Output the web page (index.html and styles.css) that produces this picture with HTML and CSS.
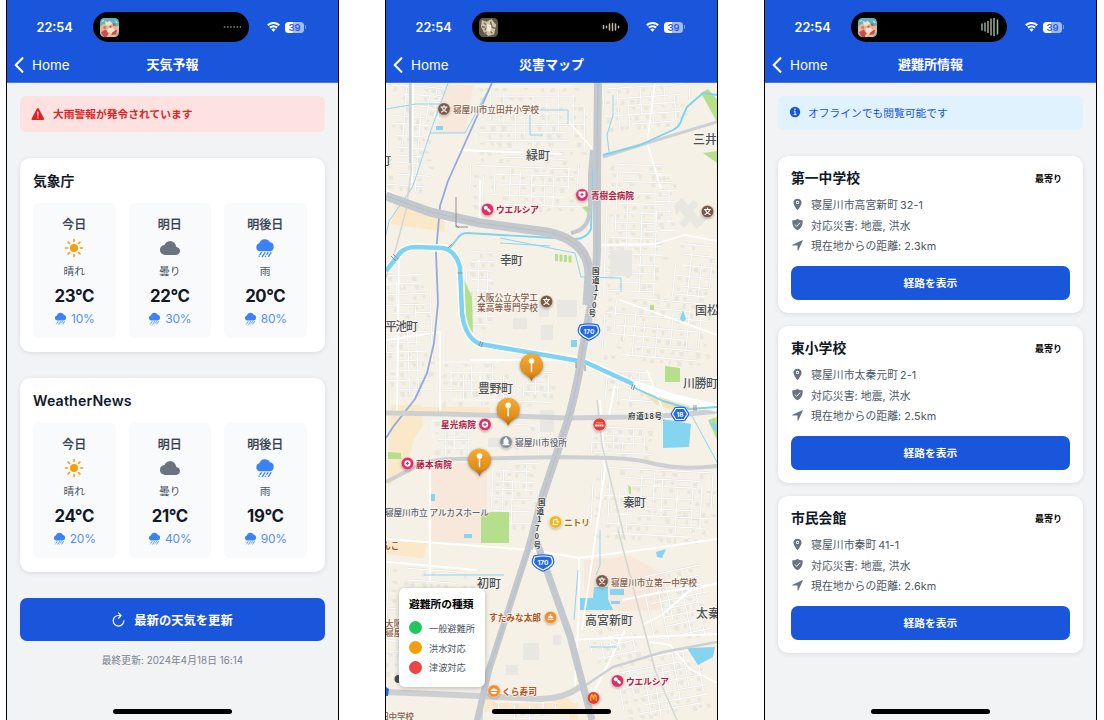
FILE: index.html
```
<!DOCTYPE html>
<html lang="ja">
<head>
<meta charset="utf-8">
<title>防災アプリ</title>
<link rel="stylesheet" href="styles.css">
</head>
<body>
<svg class="defs" width="0" height="0">
  <defs>
    <symbol id="wifi" viewBox="0 0 26 20"><path d="M13 19.500l4.300-4.700a6.500 6.500 0 0 0-8.600 0z" fill="#fff"/><path d="M5.800 11.300a10.800 10.800 0 0 1 14.400 0M1.600 6.600a16.500 16.500 0 0 1 22.800 0" fill="none" stroke="#fff" stroke-width="4.200"/></symbol>
    <symbol id="chev" viewBox="0 0 10 16"><path d="M8.400 1.200L1.700 8l6.700 6.800" fill="none" stroke="#fff" stroke-width="2.100" stroke-linecap="round" stroke-linejoin="round"/></symbol>
    <symbol id="sun" viewBox="0 0 20 20"><circle cx="10" cy="10" r="4"/><path d="M10 1.500v2M10 16.500v2M1.500 10h2M16.500 10h2M4.100 4.100l1.400 1.400M14.500 14.500l1.400 1.400M4.100 15.900l1.400-1.400M14.500 5.500l1.400-1.400" fill="none" stroke="currentColor" stroke-width="1.600" stroke-linecap="round"/></symbol>
    <symbol id="cloud" viewBox="0 0 512 512"><path d="M396 432H136c-36.440 0-70.360-12.570-95.510-35.410C14.380 372.880 0 340 0 304c0-36.580 13.390-68.120 38.720-91.220 18.110-16.530 42.220-28.250 69.180-33.870a16 16 0 0 0 11.370-9.150 156.240 156.240 0 0 1 42.050-56.940C187.760 91.690 220.500 80 256 80a153.570 153.570 0 0 1 107.140 42.900c24.730 23.810 41.500 55.280 49.180 92a16 16 0 0 0 12.120 12.390C470 237.420 512 270.430 512 328c0 33.390-12.240 60.780-35.410 79.230C456.230 423.430 428.370 432 396 432z"/></symbol>
    <symbol id="rain" viewBox="0 0 20 20"><path d="M4.800 13.200A4.100 4.100 0 0 1 4.300 5.200 5.800 5.800 0 0 1 15 4.300a4.500 4.500 0 0 1-.3 8.900z"/><path d="M6.300 14.700l-1.300 1.800M10 14.700l-2.700 4M13 14.700l-1.200 1.700M16 14.700l-2.400 3.700M4.200 18l-.2.300M10.600 18.200l-.2.300" fill="none" stroke="currentColor" stroke-width="1.300" stroke-linecap="round"/></symbol>
    <symbol id="warn" viewBox="0 0 512 512"><path fill-rule="evenodd" d="M449.070 399.080L278.640 82.580c-12.080-22.440-44.260-22.440-56.350 0L51.870 399.080A32 32 0 0 0 80 446.250h340.890a32 32 0 0 0 28.180-47.170zm-198.600-1.830a20 20 0 1 1 20-20 20 20 0 0 1-20 20zm21.720-201.150l-5.740 122a16 16 0 0 1-32 0l-5.740-121.950a21.730 21.730 0 0 1 21.500-22.690h.21a21.740 21.740 0 0 1 21.770 22.700z"/></symbol>
    <symbol id="info" viewBox="0 0 12 12"><circle cx="6" cy="6" r="5.200"/><circle cx="6" cy="3.300" r=".8" fill="#e0f2fe"/><path d="M5.200 5.200h.9v3.200M4.900 8.600h2.400" fill="none" stroke="#e0f2fe" stroke-width="1" stroke-linecap="round"/></symbol>
    <symbol id="refresh" viewBox="0 0 512 512"><path d="M320 146s24.360-12-64-12a160 160 0 1 0 160 160M256 58l80 80-80 80" fill="none" stroke="currentColor" stroke-width="34" stroke-linecap="round" stroke-linejoin="round"/></symbol>
    <symbol id="loc" viewBox="0 0 512 512"><path fill-rule="evenodd" d="M256 32C167.670 32 96 96.510 96 176c0 128 160 304 160 304s160-176 160-304c0-79.490-71.670-144-160-144zm0 208a64 64 0 1 1 64-64 64 64 0 0 1-64 64z"/><circle cx="256" cy="176" r="32"/></symbol>
    <symbol id="shield" viewBox="0 0 512 512"><path d="M256 28c-52 44-124 56-204 62-12 178 50 316 204 394C410 406 472 268 460 90c-80-6-152-18-204-62z"/><path d="M170 270l56 62 120-140" fill="none" stroke="#fff" stroke-width="38" stroke-linecap="round" stroke-linejoin="round"/></symbol>
    <symbol id="nav" viewBox="0 0 512 512"><path d="M272 464a16 16 0 0 1-16-16.420V264.130a8 8 0 0 0-8-8H64.410a16.310 16.310 0 0 1-15.490-10.650 16 16 0 0 1 8.410-19.870l384-176.150a16 16 0 0 1 21.220 21.190l-176 384A16 16 0 0 1 272 464z"/></symbol>
    <symbol id="cover" viewBox="0 0 20 20"><rect width="20" height="20" rx="4.500" fill="#62b3c0"/><path d="M0 9l4-3 4 2 3-3 5 4 4-1v6l-4 6H4l-4-4z" fill="#e3b79b"/><path d="M1 15l5-3 3 4-2 4H4zM13 12l5 1-1 4-5 1z" fill="#cf4c43"/><path d="M5 3l3 1.500 2-1.500 3 2.500-3 3-4-1zM8 11l5-1 3 3-4 3-4-1z" fill="#f8dfca"/><circle cx="5" cy="10" r="1.600" fill="#cf7961"/><circle cx="15" cy="7" r="1.500" fill="#b9604f"/><circle cx="11" cy="9" r="1.200" fill="#a2604a"/><path d="M2 4l2-2M16 3l2 2M9 18l3-2" stroke="#d4e4d1" stroke-width="1.200"/></symbol>
    <symbol id="cover2" viewBox="0 0 20 20"><rect width="20" height="20" rx="4.500" fill="#5f5948"/><path d="M3 2l5 2 5-3 5 6-2 10-6 2-5-4-3-6z" fill="#cfc3a8"/><path d="M5 5l4 3-3 5M12 4l2 6 4 1M10 12l4 4M3 9l3 1M8 15l-3 2" fill="none" stroke="#7d6b4e" stroke-width="1.500"/><path d="M8 6l5 2-1 7-4-2z" fill="#f2ecd9"/></symbol>
  </defs>
</svg>
<main class="phones">

<section class="phone">
  <header class="top">
    <div class="status"><span class="time">22:54</span><div class="island"><svg width="19" height="19"><use href="#cover"/></svg><svg width="18" height="18" viewBox="0 0 18 18"><path d="M.8 9h18" stroke="#8b8676" stroke-width="1.500" stroke-dasharray="1.500 1.700"/></svg></div><svg class="wifi" width="13" height="10"><use href="#wifi"/></svg><span class="battery">39</span><i class="nub"></i></div>
    <div class="nav"><a class="back"><svg width="10" height="16"><use href="#chev"/></svg>Home</a><h1>天気予報</h1></div>
  </header>
  <div class="body">
    <div class="alert"><svg width="16" height="16"><use href="#warn"/></svg>大雨警報が発令されています</div>
    <article class="card forecast"><h2>気象庁</h2>
      <div class="days">
        <div class="day"><b>今日</b><svg class="sun"><use href="#sun"/></svg><span>晴れ</span><strong>23°C</strong><em><svg><use href="#rain"/></svg>10%</em></div>
        <div class="day"><b>明日</b><svg class="cloud"><use href="#cloud"/></svg><span>曇り</span><strong>22°C</strong><em><svg><use href="#rain"/></svg>30%</em></div>
        <div class="day"><b>明後日</b><svg class="rain"><use href="#rain"/></svg><span>雨</span><strong>20°C</strong><em><svg><use href="#rain"/></svg>80%</em></div>
      </div>
    </article>
    <article class="card forecast"><h2 class="latin">WeatherNews</h2>
      <div class="days">
        <div class="day"><b>今日</b><svg class="sun"><use href="#sun"/></svg><span>晴れ</span><strong>24°C</strong><em><svg><use href="#rain"/></svg>20%</em></div>
        <div class="day"><b>明日</b><svg class="cloud"><use href="#cloud"/></svg><span>曇り</span><strong>21°C</strong><em><svg><use href="#rain"/></svg>40%</em></div>
        <div class="day"><b>明後日</b><svg class="rain"><use href="#rain"/></svg><span>雨</span><strong>19°C</strong><em><svg><use href="#rain"/></svg>90%</em></div>
      </div>
    </article>
    <button class="btn update"><svg width="17" height="17"><use href="#refresh"/></svg>最新の天気を更新</button>
    <p class="updated">最終更新: 2024年4月18日 16:14</p>
  </div>
  <i class="homebar"></i>
</section>

<section class="phone">
  <header class="top">
    <div class="status"><span class="time">22:54</span><div class="island"><svg width="19" height="19"><use href="#cover2"/></svg><svg width="18" height="18" viewBox="0 0 18 18"><path d="M1.500 7.500v3M4.500 8.200v1.600M7.500 6v6M10.500 5.500v7M13.500 6v6M16.500 8.300v1.400" stroke="#bdb7a6" stroke-width="1.500" stroke-linecap="round"/></svg></div><svg class="wifi" width="13" height="10"><use href="#wifi"/></svg><span class="battery">39</span><i class="nub"></i></div>
    <div class="nav"><a class="back"><svg width="10" height="16"><use href="#chev"/></svg>Home</a><h1>災害マップ</h1></div>
  </header>
  <div class="mapwrap">
    <svg class="map" viewBox="386 83 331 637" width="331" height="637">
      <rect x="386" y="83" width="331" height="637" fill="#f5f1e6"/>
      <g fill="#f8e8db"><path d="M446 85h27l-8 48h-30zM430 463h57v50h-6v30h-51zM584 560l46-4 38 20-8 34-75 2z"/></g>
      <g fill="#fae8c8"><path d="M398 195l47 18v19l-54-8zM391 405h30l2 20-9 14-7 28-19 20zM420 407h70v6h-70zM386 540l42 3-5 15-37-4zM484 700l85-2 4 12-90 2zM570 703h8v17h-9z"/></g>
      <g id="streets"></g>
      <g fill="#e9e7e2"><path d="M610 250h22v26h-22zM674 205l8-7 6 7 6-5 5 5-6 6 5 6 5-3 4 5-10 10-7-7-6 6-5-5 6-6-5-6-4 4zM557 300h20v17h-20zM539 302h10v15h-10zM513 318h14v11h-14zM541 325h12v15h-12zM523 643h16v17h-16zM553 635h8v10h-8zM506 665h12v10h-12zM488 438h12v9h-12zM540 410h14v22h-14z"/></g>
      <g fill="#b5df8a"><path d="M701 93l7-4 9 10v23zM703 153l14-2v12zM582 207l7-1v9zM463 277l9 20 1 36-8-12zM555 254h3v7h-3zM559.500 254.500h3v7h-3zM564 255h3v7h-3zM568.500 255.500h3v7h-3zM481 512h28v31h-28zM665 366l15 2v14h-15zM388 452l13 1v6h-13zM650 305h4v5h-4zM628 485l3 2v7h-2zM708 420l9-3v23zM438 410l5 3h-5z"/></g>
      <g fill="#85d5f0"><path d="M663 419l28 5-2 23-26 1zM578 598h15l1-11h14v12l5 11h-35zM610 589h14v6h-14zM611 601h9v3h-9zM687 648l28-1-2 10-15 8zM656 552l10-3-4 9-5-1zM571 340h6v7h-6zM680 319l3-9 3 9-3 3zM436 126h7v4h-7zM431 494h4v7h-4zM464 534h8v4h-8zM709 422l8 2v9z"/></g>
      <path d="M637 388l53 18-3 8-30-9z" fill="#f1e5b8"/>
      <g class="w"><path d="M386 539l65 5 80 6 48 8 76-10 62-9M579 558v50l-4 80M430 463v120M387 562l90 8M386 190l62 32M399 255l-2 160M413 83l-1 100M458 150l104 4M567 120l25 28M597 245l58-1 30-9 32 6M600 400l5 70-23 160M622 600l40-8 55-8M642 625l20-10 27-24 28-8M650 642l20 3 20 24 27 14M655 83l-8 60 14 46M620 300l97 35M386 340l54-8v80M567 640l150-6M470 360h95M480 180v45M590 700l35-70M647 370l20 50M615 385l-6 30"/></g>
      <g class="thin-water"><path d="M448 83l-18 50-15 47-3 8-23 33-3 14M386 109l30-5h30M430 133h35l27-50M530 115v20h13M530 110h38v14M613 95v20l-6 20 2 17M500 238l75 15 6 24 40 1v14M500 243l50 3M424 575h80M590 647h27M578 570l-4 50M692 416l26 48M600 530v35l-4 10M482 704v16"/></g>
      <g class="railgray"><path d="M411 83v90l-5 37-15 57-5 10M597 400l5 45 23 95M618 530l37 140 22 50"/></g>
      <path class="rail" d="M492 83l-44 98-8 25-4 47 2 50-4 40-7 30-12 26-22 28-7 11"/>
      <g class="road gray"><path d="M603 157l44-14 70-21" stroke-width="3"/><path d="M386 413l61 1 66 2 54 2 63-1 50-2 37-4" stroke-width="5"/><path d="M386 482l27-14q18-9 40-9l107-2 53 1q20 1 34 4 32 9 70 4" stroke-width="4"/><path d="M386 692l94 4 60 3q23 0 40-12" stroke-width="6"/><path d="M580 689l33-22 50-15 54-10" stroke-width="2.500"/><path d="M410 83v80" stroke-width="2"/></g>
      <g class="water-edge"><path d="M386 271l14-18q6-6 15-6l28 1q12 2 17 19l2 46q3 25 18 31l47 8 58 10 48 22 42 14 42 10"/></g>
      <g class="water"><path d="M386 271l14-18q6-6 15-6l28 1q12 2 17 19l2 46q3 25 18 31l47 8 58 10 48 22"/><path class="brook" d="M633 387l30 14 27 8 27-2M450 248l7-9q4-6 10-6l105 6q14 1 19-10l2-75M603 155l37-10 33-15q7-3 9-12l5-11 16-14 14 2"/></g>
      <g class="road"><path d="M598 83l-1 90v75q0 22-6 57l-9 48q-3 26-14 67l-25 75-14 54" stroke-width="8"/><path d="M531 540l-42 130-12 51" stroke-width="6.500"/><path d="M536 540l34 96 22 84" stroke-width="7"/><path d="M592 150l-2 25v32q0 23-19 26" stroke-width="4"/><path d="M386 196l44 16 50 11 67 9q42 9 42 43l-2 30" stroke-width="9"/></g>
      <g class="roadline"><path d="M386 196l44 16 50 11 67 9q42 9 42 43M598 83l-1 90v75q0 22-6 57l-9 48q-3 26-14 67l-25 75-14 54-40 120"/></g>
      <path d="M456 197v30h12M456 225l3 3M448 248l4-4M391 256l5 5M393 254l5 5M479 346l2-5M481 347l2-5M457.500 273h5M576 362v6M585 365v6M631 389l2-5M633 390l2-5M694 405v6M696 405v6" fill="none" stroke="#8b9196" stroke-width="1"/>

      <g class="town"><text x="526" y="159.500" textLength="24">緑町</text><text x="500" y="265" textLength="23">幸町</text><text x="693" y="143.500">三井</text><text x="379" y="164.500">町</text><text x="695" y="315">国松</text><text x="385" y="331" textLength="33">平池町</text><text x="478" y="392.500" textLength="35">豊野町</text><text x="683" y="387.500" textLength="35">川勝町</text><text x="623" y="507" textLength="23">秦町</text><text x="477" y="588" textLength="24">初町</text><text x="585" y="624.500" textLength="48">高宮新町</text><text x="696" y="617.500">太秦</text></g>
      <g class="school"><text x="453" y="113" textLength="86">寝屋川市立田井小学校</text><text x="477" y="301" textLength="61">大阪公立大学工</text><text x="477" y="310.500" textLength="61">業高等専門学校</text><text x="611" y="585.500" textLength="86">寝屋川市立第一中学校</text><text x="385" y="627">大阪</text><text x="385" y="636">寝屋</text><text x="380" y="719.500" textLength="34">田中学校</text></g>
      <g class="hosp"><text x="591" y="198.500" textLength="43">青樹会病院</text><text x="496" y="213" textLength="43">ウエルシア</text><text x="441" y="428" textLength="35">星光病院</text><text x="416" y="467.500" textLength="36">藤本病院</text><text x="626" y="685" textLength="43">ウエルシア</text></g>
      <g class="food"><text x="489" y="621" textLength="52">すたみな太郎</text><text x="502" y="695" textLength="35">くら寿司</text><text x="382" y="549">んこ</text></g>
      <text class="civic" x="515" y="446" textLength="52">寝屋川市役所</text><text class="civic" x="385" y="516" textLength="104">寝屋川市立 アルカスホール</text><text class="shop" x="564" y="525.500" textLength="26">ニトリ</text>
      <g class="roadname"><text x="628" y="418.500" textLength="34">府道18号</text><text x="592" y="274">国</text><text x="592" y="283">道</text><text x="594" y="291">1</text><text x="593" y="299.500">7</text><text x="592" y="308">0</text><text x="588.500" y="316">号</text><text x="538" y="505">国</text><text x="536.500" y="514">道</text><text x="537" y="522">1</text><text x="535" y="530.500">7</text><text x="534.500" y="539">0</text><text x="533.500" y="547.500">号</text></g>

      <g class="poi">
        <g fill="#7b5a4b"><circle cx="444" cy="109" r="6.300"/><circle cx="546.500" cy="301.500" r="6.300"/><circle cx="707.500" cy="211.500" r="6.300"/><circle cx="602" cy="581" r="6.300"/></g>
        <g fill="#e02e67"><circle cx="582" cy="195" r="6.300"/><circle cx="487.500" cy="209.500" r="6.300"/><circle cx="485" cy="424.500" r="6.300"/><circle cx="407.500" cy="463.500" r="6.300"/><circle cx="617.500" cy="681" r="6.300"/></g>
        <circle cx="506" cy="442" r="6.300" fill="#858b9e"/><circle cx="555.500" cy="522" r="6.300" fill="#f4b51b"/><circle cx="550.500" cy="617.500" r="6.300" fill="#f78b2d"/><circle cx="494" cy="691" r="6.300" fill="#f78b2d"/><circle cx="599.500" cy="424.500" r="6.500" fill="#ed3c3b"/><circle cx="593.500" cy="698" r="6.300" fill="#e83a31"/>
      </g>
      <g fill="none" stroke="#fff" stroke-width="1.100" stroke-linecap="round" stroke-linejoin="round">
        <path d="M441 107h6M444 105.500v1.500M441.500 112q4-2 4.500-4.500M446.500 112q-4-2-4.500-4.500M543.500 299.500h6M546.500 298v1.500M544 304.500q4-2 4.500-4.500M549 304.500q-4-2-4.500-4.500M704.500 209.500h6M707.500 208v1.500M705 214.500q4-2 4.500-4.500M710 214.500q-4-2-4.500-4.500M599 579h6M602 577.500v1.500M599.500 584q4-2 4.500-4.500M604.500 584q-4-2-4.500-4.500"/>
        <path d="M553 524.500h4.500M553.500 524v-4l3.500-1v3h2"/>
      </g>
      <g fill="#fff"><path d="M578.500 191.500h7v4.500l-3.500 2.500-3.500-2.500z"/><circle cx="485" cy="424.500" r="3.200"/><circle cx="407.500" cy="463.500" r="3.200"/><circle cx="485.800" cy="207.700" r="2"/><rect x="487" y="209" width="4.500" height="2.700" rx="1.300" transform="rotate(45 489 210)"/><circle cx="615.800" cy="679.200" r="2"/><rect x="617" y="680.500" width="4.500" height="2.700" rx="1.300" transform="rotate(45 619 681.500)"/><path d="M503.500 444v-3.500a2.500 2.500 0 0 1 2-2.300V437h1v1.200a2.500 2.500 0 0 1 2 2.300v3.500h1v1.300h-7V444zM547.500 620v-1.200h6v1.200zM548 618a2.500 2.500 0 0 1 5 0zM549.800 614.300h1.300v1h-1.300zM490.500 691q0-2.500 3.500-2.500t3.500 2.500zM491 692h6q0 2-3 2t-3-2z"/></g>
      <path d="M582 193v3M580.500 194.500h3M485 423v3M483.500 424.500h3M407.500 462v3M406 463.500h3" stroke="#e02e67" stroke-width="1.100" fill="none"/>
      <path d="M596 422.800h7" stroke="#f6b43c" stroke-width="1"/><path d="M595.200 425.500h8.600" stroke="#fff" stroke-width="2.200" stroke-dasharray="1.700 .5"/>
      <path d="M590.700 701v-3q.3-3 1.300-3t1.500 4.500q.5-4.500 1.500-4.500t1.300 3v3" fill="none" stroke="#ffc52c" stroke-width="1.300"/>
      <g id="shields"><g fill="#2368e6" stroke="#2368e6" stroke-width="3.600" stroke-linejoin="round"><path d="M581 326q8-2 16 0 3 5 0 8-3 3-8 5-5-2-8-5-3-3 0-8z"/><path d="M535 557q8-2 16 0 3 5 0 8-3 3-8 5-5-2-8-5-3-3 0-8z"/><path d="M676 408.500h8l3.500 5.500-3.500 5.500h-8l-3.500-5.500z"/></g><g fill="#2368e6" stroke="#fff" stroke-width="1.200"><path d="M581 326q8-2 16 0 3 5 0 8-3 3-8 5-5-2-8-5-3-3 0-8z"/><path d="M535 557q8-2 16 0 3 5 0 8-3 3-8 5-5-2-8-5-3-3 0-8z"/><path d="M676 408.500h8l3.500 5.500-3.500 5.500h-8l-3.500-5.500z"/></g><text x="589" y="333.800">170</text><text x="543" y="564.800">170</text><text x="680" y="416.500">18</text></g>
      <circle cx="398.500" cy="679" r="4" fill="#4a4a4c"/><path d="M386 687l3 2-1 7h-2z" fill="#2368e6"/>
      <g class="pins">
        <g id="pin"><path d="M531.500 353.500a11.600 11.600 0 0 1 4.800 22.100q-2.800 1.200-4.800 5.600-2-4.400-4.800-5.600a11.600 11.600 0 0 1 4.800-22.100z" fill="url(#pg)"/><circle cx="531.500" cy="361" r="2.800" fill="#fff"/><path d="M530.800 363h1.400v8.500l-.7 1-.7-1z" fill="#fff"/></g>
        <use href="#pin" x="-23.300" y="44.300"/><use href="#pin" x="-52" y="95"/>
      </g>
      <defs><linearGradient id="pg" x1="0" y1="0" x2="0" y2="1"><stop offset="0" stop-color="#f7ab2f"/><stop offset=".72" stop-color="#dd8e1d"/><stop offset="1" stop-color="#a86309"/></linearGradient></defs>
    </svg>
    <aside class="legend"><h3>避難所の種類</h3><p><i class="g"></i>一般避難所</p><p><i class="o"></i>洪水対応</p><p><i class="r"></i>津波対応</p></aside>
  </div>
  <i class="homebar"></i>
</section>

<section class="phone">
  <header class="top">
    <div class="status"><span class="time">22:54</span><div class="island"><svg width="19" height="19"><use href="#cover"/></svg><svg width="18" height="18" viewBox="0 0 18 18"><path d="M1 5.500v7M4 4.500v9" stroke="#8caba4" stroke-width="1.500"/><path d="M7 3v12M10 .5v17" stroke="#ada894" stroke-width="1.500"/><path d="M13 0v18M16.500 1.500v15" stroke="#9bb3a4" stroke-width="1.500"/></svg></div><svg class="wifi" width="13" height="10"><use href="#wifi"/></svg><span class="battery">39</span><i class="nub"></i></div>
    <div class="nav"><a class="back"><svg width="10" height="16"><use href="#chev"/></svg>Home</a><h1>避難所情報</h1></div>
  </header>
  <div class="body">
    <div class="notice"><svg width="12" height="12"><use href="#info"/></svg>オフラインでも閲覧可能です</div>
    <article class="card shelter"><div class="head"><h2>第一中学校</h2><small>最寄り</small></div><ul><li><svg><use href="#loc"/></svg><p>寝屋川市高宮新町<span>32-1</span></p></li><li><svg><use href="#shield"/></svg><p>対応災害: 地震, 洪水</p></li><li><svg><use href="#nav"/></svg><p>現在地からの距離: 2.3km</p></li></ul><button class="btn route">経路を表示</button></article>
    <article class="card shelter"><div class="head"><h2>東小学校</h2><small>最寄り</small></div><ul><li><svg><use href="#loc"/></svg><p>寝屋川市太秦元町<span>2-1</span></p></li><li><svg><use href="#shield"/></svg><p>対応災害: 地震, 洪水</p></li><li><svg><use href="#nav"/></svg><p>現在地からの距離: 2.5km</p></li></ul><button class="btn route">経路を表示</button></article>
    <article class="card shelter"><div class="head"><h2>市民会館</h2><small>最寄り</small></div><ul><li><svg><use href="#loc"/></svg><p>寝屋川市秦町<span>41-1</span></p></li><li><svg><use href="#shield"/></svg><p>対応災害: 地震, 洪水</p></li><li><svg><use href="#nav"/></svg><p>現在地からの距離: 2.6km</p></li></ul><button class="btn route">経路を表示</button></article>
  </div>
  <i class="homebar"></i>
</section>
</main>
<script src="map.js"></script>
</body>
</html>
```

FILE: styles.css
```
* { box-sizing: border-box; margin: 0; padding: 0; }
body { width: 1104px; height: 720px; overflow: hidden; background: #fff; font-family: Inter, "Noto Sans CJK JP", sans-serif; }
.defs { position: absolute; }
svg { display: block; flex: none; }
.phones { display: flex; gap: 46px; padding-left: 6px; }
.phone { position: relative; width: 333px; height: 720px; border: solid #000; border-width: 0 1px; background: #f2f3f5; overflow: hidden; }
.top { height: 83px; background: #1a56db; border-bottom: 1px solid #4576e0; color: #fff; padding-top: 12px; }
.status { display: flex; align-items: center; height: 30px; padding-left: 29.500px; }
.time { width: 56.500px; font-size: 12.700px; font-weight: 600; }
.island { display: flex; align-items: center; justify-content: space-between; width: 156px; height: 30px; border-radius: 15px; background: #000; padding: 0 8px 0 7px; }
.wifi { margin-left: 18px; }
.battery { width: 19px; height: 11px; margin-left: 5px; border-radius: 3.500px; background: linear-gradient(90deg, #fff 42%, #a3bbf1 42%); color: #2a5fdb; font-size: 9.500px; font-weight: 600; line-height: 11px; text-align: center; }
.nub { width: 1px; height: 4px; margin-left: 1px; background: #7f9fec; }
.nav { display: grid; grid-template-columns: 100px 1fr 100px; align-items: center; height: 40px; padding-top: 5px; }
.back { display: flex; align-items: center; gap: 8px; padding-left: 7px; font-size: 13.400px; }
.nav h1 { padding-bottom: 2px; font-size: 13px; line-height: 18px; font-weight: 600; text-align: center; }
.body { padding: 13px; }
.alert, .notice { display: flex; align-items: center; border-radius: 6px; font-size: 10.750px; }
.alert { height: 36px; margin-bottom: 26px; padding: 0 0 1px 10px; gap: 7px; background: #fee2e2; color: #dc2626; font-weight: 600; }
.notice { height: 34px; margin-bottom: 26px; padding: 0 0 2px 11px; gap: 7px; background: #e0f2fe; color: #1a56db; }
.alert svg, .notice svg, li svg, .day svg { fill: currentColor; }
.card { background: #fff; border-radius: 10px; box-shadow: 0 1px 5px rgba(17,24,39,.1); padding: 0 13px; color: #111827; }
.forecast { height: 194px; margin-bottom: 26px; }
.forecast h2 { height: 45px; line-height: 46px; font-size: 13.800px; font-weight: 600; }
.forecast .latin { font-size: 14.200px; letter-spacing: .15px; }
.days { display: flex; gap: 13px; }
.day { width: 82.500px; height: 135px; padding-top: 13px; border-radius: 6px; background: #f9fafb; display: flex; flex-direction: column; align-items: center; }
.day b { font-size: 12px; line-height: 18px; font-weight: 500; color: #374151; -webkit-text-stroke: .2px #374151; }
.day > svg { width: 20px; height: 20px; margin: 4px 0 6px; }
.sun { color: #f59e0b; } .cloud { color: #6b7280; } .rain { color: #3b82f6; }
.day span { height: 16px; font-size: 10.750px; line-height: 16px; color: #4b5563; }
.day strong { height: 22px; margin-top: 5px; font-size: 16.800px; line-height: 22px; font-weight: 700; letter-spacing: -.4px; }
.day em { display: flex; align-items: center; gap: 4px; height: 16px; margin-top: 3px; font-size: 12px; font-style: normal; letter-spacing: -.25px; color: #5790f3; }
.day em svg { width: 13px; height: 13px; color: #3b82f6; }
.btn { display: flex; align-items: center; justify-content: center; width: 100%; border: 0; border-radius: 7px; background: #1a56db; color: #fff; font-family: inherit; font-weight: 600; }
.update { height: 43px; gap: 7px; padding-right: 2px; font-size: 12.300px; }
.updated { margin-top: 12px; height: 15px; line-height: 15px; text-align: center; font-size: 9.700px; letter-spacing: .1px; color: #7b818d; }
.shelter { height: 157px; margin-bottom: 13px; }
.head { display: flex; align-items: center; justify-content: space-between; height: 38px; padding: 7px 8px 1px 0; }
.head h2 { font-size: 13.800px; line-height: 20px; font-weight: 600; }
.head small { font-size: 9px; font-weight: 600; color: #000; }
.shelter ul { list-style: none; height: 72px; }
.shelter li { display: flex; align-items: center; gap: 7px; height: 20.500px; font-size: 10.800px; letter-spacing: .08px; color: #4b5563; }
.shelter li span { margin-left: 2px; }
.shelter li svg { width: 13px; height: 13px; color: #6b7280; }
.route { height: 34px; padding-bottom: 2px; font-size: 10.750px; }
.homebar { position: absolute; left: 106px; bottom: 6.500px; width: 119px; height: 4.500px; border-radius: 3px; background: #000; }

.mapwrap { position: relative; height: 637px; }
.map { font-family: "Noto Sans CJK JP", sans-serif; }
.map text { paint-order: stroke; stroke: rgba(250,248,241,.85); stroke-width: 1.600px; stroke-linejoin: round; }
.map .town { font-size: 12px; fill: #4f5356; font-weight: 500; }
.map .school { font-size: 8.700px; fill: #875f50; font-weight: 500; }
.map .hosp { font-size: 8.700px; fill: #ad2148; font-weight: 600; }
.map .food { font-size: 8.700px; fill: #b5541c; font-weight: 600; }
.map .civic { font-size: 8.700px; fill: #5f6475; font-weight: 500; }
.map .shop { font-size: 9px; fill: #a17412; font-weight: 600; }
.map .roadname { font-size: 7.500px; fill: #41464a; font-weight: 600; }
.map .poi circle { stroke: rgba(255,255,255,.7); stroke-width: .7; }
.map .poi { filter: drop-shadow(0 1px 1px rgba(0,0,0,.25)); }
.pins { filter: drop-shadow(0 1px 1.500px rgba(0,0,0,.4)); }
.map #shields text { font: 700 6.500px Inter, sans-serif; fill: #fff; stroke: none; text-anchor: middle; }
.w path, .thin-water path, .railgray path, .road path, .water path, .water-edge path, .roadline path, .rail { fill: none; stroke-linejoin: round; }
.w path { stroke: #fff; stroke-width: 1.800; }
.thin-water path { stroke: #8fd5ed; stroke-width: 1; }
.railgray path { stroke: #d3d7d4; stroke-width: 1.500; }
.rail { stroke: #96a9dd; stroke-width: 1.800; }
.road path { stroke: #c3c8ce; }
.road.gray path { stroke: #cdd0d3; }
.roadline path { stroke: #b6bcc3; stroke-width: .8; }
.water path { stroke: #7fd3f0; stroke-width: 4.600; }
.water .brook { stroke-width: 1.900; }
.water-edge path { stroke: #fff; stroke-width: 7.500; }
.street { fill: none; stroke: #fdfdfb; stroke-width: 1.300; }
.edge { fill: none; stroke: #e0dfdc; stroke-width: 2.100; }
.house { fill: #e9e6de; }
.legend { position: absolute; left: 13px; top: 505px; width: 86px; height: 99px; padding: 8px 10px; border-radius: 6px; background: #fff; box-shadow: 0 1px 5px rgba(0,0,0,.25); }
.legend h3 { height: 17px; margin-bottom: 5px; font-size: 10.750px; line-height: 17px; font-weight: 600; }
.legend p { display: flex; align-items: center; gap: 7px; height: 19.700px; font-size: 9.200px; color: #4b5563; }
.legend i { width: 13px; height: 13px; border-radius: 50%; }
.g { background: #22c55e; } .o { background: #f59e0b; } .r { background: #ef4444; }
```

FILE: map.js
```
// Fills residential districts with side streets and building footprints.
let seed = 11;
const rnd = () => (seed = (seed * 16807) % 2147483647) / 2147483647;
const districts = [
  [388, 86, 46, 105, 4], [476, 86, 112, 64, 0], [604, 86, 88, 44, -4], [470, 158, 108, 55, 2],
  [606, 165, 62, 130, 2], [604, 300, 108, 58, 5], [386, 275, 46, 120, -2], [440, 362, 70, 45, 0],
  [432, 420, 40, 38, 0], [492, 463, 48, 66, 2], [592, 428, 62, 26, 2], [592, 470, 125, 68, 3],
  [386, 570, 88, 105, 4], [648, 570, 64, 68, -12], [620, 655, 88, 60, -10], [510, 425, 42, 30, 1],
  [466, 252, 30, 78, 2], [606, 372, 55, 38, 4], [428, 88, 14, 40, 8], [590, 625, 50, 32, -12],
  [490, 702, 70, 18, 0], [655, 175, 20, 60, 0], [675, 245, 40, 55, 6], [515, 372, 40, 36, 2]
];
const ns = "http://www.w3.org/2000/svg";
const root = document.getElementById("streets");
for (const [x, y, w, h, a] of districts) {
  let roads = "", houses = "";
  for (let j = y; j < y + h; j += 7 + rnd() * 5) {
    const s = rnd() * w * .3;
    roads += `M${x + s} ${j}H${x + w - rnd() * w * .25}`;
    for (let i = x + 3; i < x + w - 4; i += 6 + rnd() * 7)
      if (rnd() > .3) houses += `M${i} ${j + 2}h${2 + rnd() * 4}v${2 + rnd() * 3}h-${2 + rnd() * 3}z`;
  }
  for (let i = x; i < x + w; i += 8 + rnd() * 8) {
    const s = rnd() * h * .4;
    roads += `M${i} ${y + s}V${Math.min(y + h, y + s + h * (.4 + rnd() * .5))}`;
  }
  const g = document.createElementNS(ns, "g");
  g.setAttribute("transform", `rotate(${a} ${x + w / 2} ${y + h / 2})`);
  for (const [c, d] of [["house", houses], ["edge", roads], ["street", roads]]) {
    const p = document.createElementNS(ns, "path");
    p.setAttribute("class", c);
    p.setAttribute("d", d);
    g.append(p);
  }
  root.append(g);
}
```
